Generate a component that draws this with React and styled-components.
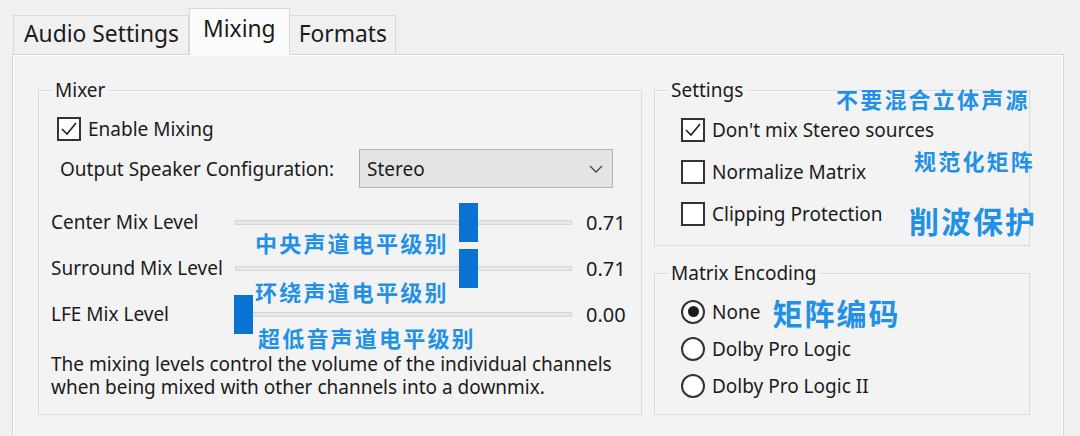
import React from 'react'
import styled, { createGlobalStyle } from 'styled-components'

const Global = createGlobalStyle`
  html, body { margin: 0; padding: 0; background: #f0f0f0; }
  body { font-family: "Noto Sans", "Open Sans", sans-serif; color: #1b1b1b; }
`

const Screen = styled.div`
  width: 1080px;
  height: 436px;
  overflow: hidden;
  padding-left: 12px;
  box-sizing: border-box;
`

const TabRow = styled.div`
  display: flex;
  align-items: flex-end;
  height: 54px;
  padding-left: 2px;
`

const Tab = styled.div`
  box-sizing: border-box;
  height: ${p => (p.active ? '47px' : '39px')};
  padding: ${p => p.pad};
  display: flex;
  align-items: center;
  font-size: 22.8px;
  border: 1px solid #d9d9d9;
  border-bottom: none;
  margin-left: ${p => (p.active ? '0' : '-1px')};
  background: ${p => (p.active ? '#fcfcfc' : '#f0f0f0')};
  position: relative;
  z-index: ${p => (p.active ? 2 : 1)};
  margin-bottom: ${p => (p.active ? '-1px' : '0')};
`

const Panel = styled.div`
  width: 1052px;
  height: 420px;
  box-sizing: border-box;
  border: 1px solid #d6d6d6;
  box-shadow: inset 1px 1px 0 #ffffff, inset -1px 0 0 #ffffff;
  background: #f3f3f3;
  padding: 22px 0 0 25px;
  display: grid;
  grid-template-columns: 604px 376px;
  column-gap: 12px;
  align-items: start;
`

const Group = styled.fieldset`
  margin: 0;
  padding: 0 0 ${p => p.bottom || 10}px;
  min-width: 0;
  border: 1px solid #dadada;
  box-shadow: inset 1px 1px 0 #fbfbfb;
`

const Legend = styled.legend`
  margin-left: 13px;
  padding: 0 3px;
  font-size: 19px;
  line-height: 26px;
`

const Column = styled.div`
  display: flex;
  flex-direction: column;
  gap: 14px;
`

const MixerBody = styled.div`
  padding: 12px 0 0 12px;
`

const OptionList = styled.div`
  position: relative;
  display: flex;
  flex-direction: column;
  padding: ${p => p.top}px 0 0 26px;
`

const Option = styled.label`
  display: flex;
  align-items: center;
  gap: 7px;
  height: ${p => p.h}px;
  margin-left: ${p => p.indent || 0}px;
  font-size: 19px;
  white-space: nowrap;
`

const Box = styled.span`
  width: 24px;
  height: 24px;
  box-sizing: border-box;
  border: 2px solid #333;
  background: #fff;
  display: flex;
  align-items: center;
  justify-content: center;
  flex-shrink: 0;
`

const Radio = styled(Box)`
  border-radius: 50%;
  &::after {
    content: '';
    display: ${p => (p.on ? 'block' : 'none')};
    width: 11px;
    height: 11px;
    border-radius: 50%;
    background: #1d1d1d;
  }
`

const ConfigRow = styled.div`
  display: flex;
  align-items: center;
  margin: 6px 0 0 9px;
  height: 39px;
`

const ConfigLabel = styled.span`
  width: 299px;
  font-size: 19px;
`

const Combo = styled.div`
  width: 254px;
  height: 39px;
  box-sizing: border-box;
  border: 1px solid #b3b3b3;
  background: #e4e4e4;
  display: flex;
  align-items: center;
  justify-content: space-between;
  padding: 0 9px 0 7px;
  font-size: 19px;
`

const Sliders = styled.div`
  margin-top: 11px;
`

const SliderRow = styled.div`
  position: relative;
  display: flex;
  align-items: center;
  height: 46px;
`

const SliderLabel = styled.span`
  width: 184px;
  font-size: 19px;
  white-space: nowrap;
  overflow: hidden;
`

const Track = styled.div`
  position: relative;
  width: 337px;
  height: 5px;
  box-sizing: border-box;
  background: #e7e7e7;
  border: 1px solid #d6d6d6;
`

const Thumb = styled.div`
  position: absolute;
  top: -18px;
  width: 19px;
  height: 39px;
  background: #0a72d3;
  z-index: 1;
`

const Value = styled.span`
  margin-left: 14px;
  font-size: 20px;
`

const Note = styled.span`
  position: absolute;
  left: ${p => p.x}px;
  top: ${p => p.y}px;
  font-family: "Noto Sans CJK SC", "Noto Sans", sans-serif;
  font-weight: 700;
  font-size: ${p => p.size || 22}px;
  letter-spacing: ${p => (p.size ? 2 : 2.2)}px;
  line-height: 1.2;
  color: #2290e6;
  white-space: nowrap;
  text-shadow: 0 0 1px #fff;
  z-index: 3;
`

const InlineNote = styled.span`
  margin-left: 5px;
  font-family: "Noto Sans CJK SC", "Noto Sans", sans-serif;
  font-weight: 700;
  font-size: 30px;
  letter-spacing: 2px;
  color: #2290e6;
`

const Description = styled.p`
  margin: 16px 0 0;
  font-size: 19px;
  line-height: 23px;
  width: 580px;
`

const Check = () => (
  <svg width="18" height="16" viewBox="0 0 18 16">
    <polyline points="2,8 7,13 16,2" fill="none" stroke="#222" strokeWidth="1.6" />
  </svg>
)

const Chevron = () => (
  <svg width="14" height="8" viewBox="0 0 14 8">
    <polyline points="1,1 7,7 13,1" fill="none" stroke="#444" strokeWidth="1.3" />
  </svg>
)

const sliders = [
  { label: 'Center Mix Level', value: 0.71, note: '中央声道电平级别', nx: 204, ny: 30 },
  { label: 'Surround Mix Level', value: 0.71, note: '环绕声道电平级别', nx: 204, ny: 33 },
  { label: 'LFE Mix Level', value: 0, note: '超低音声道电平级别', nx: 207, ny: 33 },
]

export default function App() {
  return (
    <Screen>
      <Global />
      <TabRow>
        <Tab pad="0 9px 4px 10px">Audio Settings</Tab>
        <Tab active pad="0 13px 8px 13px">Mixing</Tab>
        <Tab pad="0 8px 4px 9px">Formats</Tab>
      </TabRow>
      <Panel>
        <Group bottom={15}>
          <Legend>Mixer</Legend>
          <MixerBody>
            <Option h={28} indent={6}>
              <Box><Check /></Box>
              Enable Mixing
            </Option>
            <ConfigRow>
              <ConfigLabel>Output Speaker Configuration:</ConfigLabel>
              <Combo>
                Stereo
                <Chevron />
              </Combo>
            </ConfigRow>
            <Sliders>
              {sliders.map(s => (
                <SliderRow key={s.label}>
                  <SliderLabel>{s.label}</SliderLabel>
                  <Track>
                    <Thumb style={{ left: `${s.value * 317 - 2}px` }} />
                  </Track>
                  <Value>{s.value.toFixed(2)}</Value>
                  <Note x={s.nx} y={s.ny}>{s.note}</Note>
                </SliderRow>
              ))}
            </Sliders>
            <Description>
              The mixing levels control the volume of the individual channels when being mixed with
              other channels into a downmix.
            </Description>
          </MixerBody>
        </Group>
        <Column>
          <Group>
            <Legend>Settings</Legend>
            <OptionList top={6}>
              <Option h={42}>
                <Box><Check /></Box>
                Don't mix Stereo sources
              </Option>
              <Option h={42}>
                <Box />
                Normalize Matrix
              </Option>
              <Option h={42}>
                <Box />
                Clipping Protection
              </Option>
              <Note x={181} y={-18}>不要混合立体声源</Note>
              <Note x={259} y={44}>规范化矩阵</Note>
              <Note x={254} y={99} size={30}>削波保护</Note>
            </OptionList>
          </Group>
          <Group>
            <Legend>Matrix Encoding</Legend>
            <OptionList top={7}>
              <Option h={37}>
                <Radio on />
                None
                <InlineNote>矩阵编码</InlineNote>
              </Option>
              <Option h={37}>
                <Radio />
                Dolby Pro Logic
              </Option>
              <Option h={37}>
                <Radio />
                Dolby Pro Logic II
              </Option>
            </OptionList>
          </Group>
        </Column>
      </Panel>
    </Screen>
  )
}
